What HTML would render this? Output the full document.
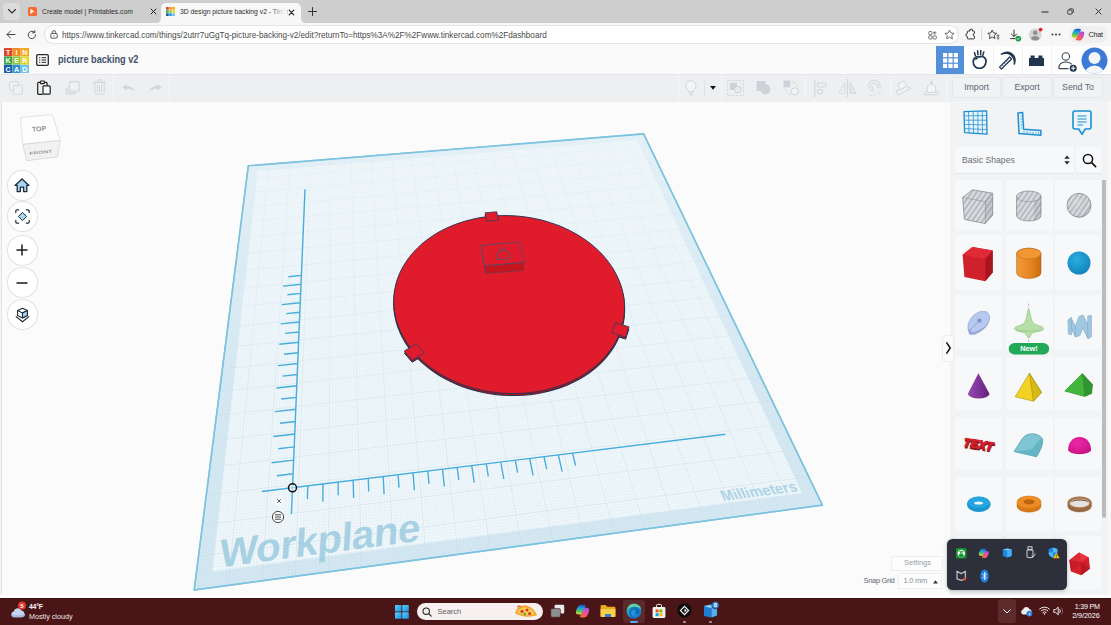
<!DOCTYPE html>
<html lang="en">
<head>
<meta charset="utf-8">
<title>3D design picture backing v2 - Tinkercad</title>
<style>
html,body{margin:0;padding:0;}
body{width:1111px;height:625px;position:relative;overflow:hidden;background:#f9f9f9;font-family:"Liberation Sans",sans-serif;color:#222;}
.abs{position:absolute;}
svg{position:absolute;overflow:visible;}
.t{position:absolute;white-space:nowrap;line-height:1;}
/* browser chrome */
#tabstrip{left:0;top:0;width:1111px;height:23px;background:#cecece;}
#addr{left:0;top:23px;width:1111px;height:23px;background:#f7f7f7;}
#pill{left:45px;top:26px;width:913px;height:17px;border-radius:8.5px;background:#fff;box-shadow:0 0 0 1px #e4e4e4;}
#tcad{left:0;top:46px;width:1111px;height:28px;background:#fafafa;}
#tbar{left:0;top:74px;width:1111px;height:27.6px;background:#edeff1;}
#canvas{left:2px;top:101.6px;width:948px;height:493.4px;background:#fbfbfb;}
#leftedge{left:0;top:101px;width:2px;height:497px;background:#f5f5f5;border-right:1px solid #e4e4e4;box-sizing:border-box;}
#rpanel{left:950px;top:101px;width:158px;height:494px;background:#f2f3f4;}
#taskbar{left:0;top:597.7px;width:1111px;height:28px;background:#4a1517;}
.cell{position:absolute;width:48px;height:54px;background:#f7f8f9;border-radius:2px;}
.tbtn{position:absolute;top:78px;height:19px;background:#f1f2f4;border-radius:2px;color:#5d6673;font-size:8.8px;letter-spacing:-0.05px;text-align:center;line-height:18.4px;box-shadow:0 0 0 1px #e6e8ea;}
.nav{position:absolute;left:10px;width:22px;height:22px;border-radius:11px;background:#fff;box-shadow:0 0 0 1px #e2e2e2;}
</style>
</head>
<body>
<!-- ================= BROWSER CHROME ================= -->
<div id="tabstrip" class="abs"></div>
<!-- tab search button -->
<div class="abs" style="left:3px;top:3px;width:17px;height:17px;border-radius:4px;background:#dcdcdc;"></div>
<svg style="left:7px;top:8px" width="10" height="7" viewBox="0 0 10 7"><path d="M1.5 1.5 L5 5 L8.5 1.5" fill="none" stroke="#333" stroke-width="1.1" stroke-linecap="round" stroke-linejoin="round"/></svg>
<!-- tab 1 (inactive) -->
<div class="abs" style="left:28px;top:7px;width:9px;height:9px;border-radius:1.5px;background:#f66a2f;"></div>
<svg style="left:28px;top:7px" width="9" height="9" viewBox="0 0 9 9"><path d="M2.2 1.8 L6.6 4.4 L4.2 5.4 L2.6 7.4 Z" fill="#fff"/></svg>
<div class="t" id="tab1txt" style="left:42px;top:7.6px;font-size:8px;color:#2c2c2c;transform:scaleX(0.846);transform-origin:0 0;">Create model | Printables.com</div>
<svg style="left:149.5px;top:8px" width="7" height="7" viewBox="0 0 7 7"><path d="M1 1 L6 6 M6 1 L1 6" stroke="#222" stroke-width="1" stroke-linecap="round"/></svg>
<!-- active tab -->
<div class="abs" style="left:161.3px;top:2.5px;width:139.4px;height:21.5px;border-radius:5px 5px 0 0;background:#f7f7f7;"></div>
<svg style="left:155.3px;top:18px" width="6" height="6" viewBox="0 0 6 6"><path d="M6 0 V6 H0 A6 6 0 0 0 6 0Z" fill="#f7f7f7"/></svg>
<svg style="left:300.7px;top:18px" width="6" height="6" viewBox="0 0 6 6"><path d="M0 0 V6 H6 A6 6 0 0 1 0 0Z" fill="#f7f7f7"/></svg>
<!-- tinkercad favicon -->
<svg style="left:166px;top:7px" width="9" height="9" viewBox="0 0 9 9">
<rect x="0" y="0" width="3" height="3" fill="#e2462c"/><rect x="3" y="0" width="3" height="3" fill="#f28b20"/><rect x="6" y="0" width="3" height="3" fill="#f5a81c"/>
<rect x="0" y="3" width="3" height="3" fill="#42a84a"/><rect x="3" y="3" width="3" height="3" fill="#8cc540"/><rect x="6" y="3" width="3" height="3" fill="#e3d325"/>
<rect x="0" y="6" width="3" height="3" fill="#1b5fa8"/><rect x="3" y="6" width="3" height="3" fill="#2b8ed1"/><rect x="6" y="6" width="3" height="3" fill="#6ec1e8"/>
<path d="M3 0V9M6 0V9M0 3H9M0 6H9" stroke="#fff" stroke-width="0.5"/></svg>
<div class="t" id="tab2txt" style="left:180px;top:7.6px;font-size:8px;color:#2c2c2c;transform:scaleX(0.846);transform-origin:0 0;width:127px;overflow:hidden;">3D design picture backing v2 - Tinkercad</div>
<div class="abs" style="left:271px;top:5px;width:16px;height:14px;background:linear-gradient(90deg,rgba(247,247,247,0),#f7f7f7 85%);"></div>
<svg style="left:287.8px;top:8.5px" width="7" height="7" viewBox="0 0 7 7"><path d="M1.2 1.2 L5.8 5.8 M5.8 1.2 L1.2 5.8" stroke="#222" stroke-width="1.15" stroke-linecap="round"/></svg>
<!-- new tab + -->
<svg style="left:307.5px;top:7px" width="9" height="9" viewBox="0 0 9 9"><path d="M4.5 0.5 V8.5 M0.5 4.5 H8.5" stroke="#333" stroke-width="1" stroke-linecap="round"/></svg>
<!-- window controls -->
<svg style="left:1040.5px;top:10.7px" width="8" height="2" viewBox="0 0 8 2"><path d="M0.5 1 H7.5" stroke="#222" stroke-width="1"/></svg>
<svg style="left:1067.3px;top:8.3px" width="7" height="7" viewBox="0 0 9 9"><rect x="1" y="2.5" width="5.5" height="5.5" rx="1.2" fill="none" stroke="#222" stroke-width="1"/><path d="M3 2.5 V2 A1 1 0 0 1 4 1 H7 A1.2 1.2 0 0 1 8.2 2.2 V5 A1 1 0 0 1 7.2 6 H6.6" fill="none" stroke="#222" stroke-width="1"/></svg>
<svg style="left:1094.6px;top:8.4px" width="7" height="7" viewBox="0 0 8 8"><path d="M1 1 L7 7 M7 1 L1 7" stroke="#222" stroke-width="1" stroke-linecap="round"/></svg>

<!-- address bar row -->
<div id="addr" class="abs"></div>
<svg style="left:6px;top:30.2px" width="10" height="9" viewBox="0 0 10 9"><path d="M9 4.5 H1.2 M4.5 1 L1 4.5 L4.5 8" fill="none" stroke="#444" stroke-width="1" stroke-linecap="round" stroke-linejoin="round"/></svg>
<svg style="left:27px;top:29.7px" width="10" height="10" viewBox="0 0 10 10"><path d="M8.6 5 A3.7 3.7 0 1 1 7.4 2.2" fill="none" stroke="#444" stroke-width="1" stroke-linecap="round"/><path d="M7.8 0.6 V2.8 H5.6" fill="none" stroke="#444" stroke-width="1" stroke-linecap="round" stroke-linejoin="round"/></svg>
<div id="pill" class="abs"></div>
<!-- lock -->
<svg style="left:49.5px;top:29.5px" width="8" height="9" viewBox="0 0 8 9"><rect x="0.8" y="3.4" width="6.4" height="4.8" rx="1.1" fill="none" stroke="#444" stroke-width="0.9"/><path d="M2.3 3.4 V2.4 A1.7 1.7 0 0 1 5.7 2.4 V3.4" fill="none" stroke="#444" stroke-width="0.9"/><circle cx="4" cy="5.8" r="0.6" fill="#444"/></svg>
<div class="t" id="urltxt" style="left:62px;top:31.3px;font-size:8.8px;color:#484848;transform:scaleX(0.926);transform-origin:0 0;">https://www.tinkercad.com/things/2utrr7uGgTq-picture-backing-v2/edit?returnTo=https%3A%2F%2Fwww.tinkercad.com%2Fdashboard</div>
<!-- pill right icons: app grid + star -->
<svg style="left:928px;top:29.5px" width="10" height="10" viewBox="0 0 10 10"><rect x="0.8" y="1.5" width="3.2" height="3.2" rx="0.7" fill="none" stroke="#555" stroke-width="0.8"/><rect x="0.8" y="5.8" width="3.2" height="3.2" rx="0.7" fill="none" stroke="#555" stroke-width="0.8"/><rect x="5.1" y="5.8" width="3.2" height="3.2" rx="0.7" fill="none" stroke="#555" stroke-width="0.8"/><path d="M6.7 1.2 V4.6 M5 2.9 H8.4" stroke="#555" stroke-width="0.8"/></svg>
<svg style="left:943.5px;top:29px" width="11" height="11" viewBox="0 0 11 11"><path d="M5.5 1 L6.9 4 L10.1 4.4 L7.7 6.6 L8.4 9.8 L5.5 8.2 L2.6 9.8 L3.3 6.6 L0.9 4.4 L4.1 4 Z" fill="none" stroke="#555" stroke-width="0.85" stroke-linejoin="round"/></svg>
<!-- extension puzzle -->
<svg style="left:964px;top:28.5px" width="12" height="12" viewBox="0 0 12 12"><path d="M4.2 2 H6 A1.3 1.3 0 1 1 8.4 2 H9.6 A0.9 0.9 0 0 1 10.5 2.9 V4.4 A1.4 1.4 0 1 0 10.5 7.2 V9 A0.9 0.9 0 0 1 9.6 9.9 H4.2 A0.9 0.9 0 0 1 3.3 9 V7.4 A1.4 1.4 0 1 1 3.3 4.6 V2.9 A0.9 0.9 0 0 1 4.2 2Z" fill="none" stroke="#333" stroke-width="1" stroke-linejoin="round"/></svg>
<div class="abs" style="left:981px;top:29px;width:1px;height:11px;background:#d8d8d8;"></div>
<!-- favorites star with lines -->
<svg style="left:987px;top:29px" width="13" height="11" viewBox="0 0 13 11"><path d="M5.2 1 L6.5 3.9 L9.6 4.3 L7.3 6.4 L7.9 9.6 L5.2 8 L2.5 9.6 L3.1 6.4 L0.8 4.3 L3.9 3.9 Z" fill="none" stroke="#333" stroke-width="0.9" stroke-linejoin="round"/><path d="M9.6 6.2 H12.2 M9.8 8 H12.2 M10.2 9.8 H12.2" stroke="#333" stroke-width="0.9"/><rect x="8.8" y="5.4" width="4" height="5.2" fill="#f7f7f7" opacity="0"/></svg>
<!-- download -->
<svg style="left:1009.2px;top:28.5px" width="13" height="13" viewBox="0 0 13 13"><path d="M5 1 V7.4 M2.4 5 L5 7.6 L7.6 5 M1.6 9.6 H6" fill="none" stroke="#333" stroke-width="1" stroke-linecap="round" stroke-linejoin="round"/><circle cx="9.3" cy="9.6" r="2.9" fill="#1f9d4a"/><path d="M7.9 9.6 L8.9 10.6 L10.7 8.7" fill="none" stroke="#fff" stroke-width="0.8"/></svg>
<!-- profile -->
<svg style="left:1027.5px;top:27px" width="16" height="15" viewBox="0 0 16 15"><circle cx="7.2" cy="7.7" r="6.3" fill="#d4d4d4"/><circle cx="7.2" cy="5.8" r="2.3" fill="#8f8f8f"/><path d="M2.9 11.8 A4.5 4 0 0 1 11.5 11.8 A6.2 6.2 0 0 1 2.9 11.8Z" fill="#8f8f8f"/><circle cx="12.6" cy="2.6" r="1.9" fill="#e0202b"/></svg>
<!-- more ... -->
<svg style="left:1051px;top:33px" width="10" height="3" viewBox="0 0 10 3"><circle cx="1.4" cy="1.5" r="0.95" fill="#333"/><circle cx="5" cy="1.5" r="0.95" fill="#333"/><circle cx="8.6" cy="1.5" r="0.95" fill="#333"/></svg>
<!-- copilot chat pill -->
<div class="abs" style="left:1068.5px;top:26px;width:39.5px;height:17px;border-radius:8.5px;background:#efefef;"></div>
<svg style="left:1071px;top:28px" width="14" height="13" viewBox="0 0 14 13">
<defs>
<linearGradient id="cpa" x1="0.3" y1="0" x2="0.2" y2="1"><stop offset="0" stop-color="#1a55c8"/><stop offset="0.3" stop-color="#18a0e6"/><stop offset="0.62" stop-color="#4cc466"/><stop offset="1" stop-color="#f7d42c"/></linearGradient>
<linearGradient id="cpb" x1="0.7" y1="0" x2="0.3" y2="1"><stop offset="0" stop-color="#a44ee6"/><stop offset="0.45" stop-color="#e84fa4"/><stop offset="1" stop-color="#f56a2c"/></linearGradient>
<symbol id="copilot" viewBox="0 0 14 13"><path d="M3.4 1.6 C4 0.8 8.6 0.4 9.6 1 C10.4 1.6 9.2 3.6 8.6 5 L6.6 9.4 C6.2 10.2 3 10 1.6 9.4 C0.4 8.8 0.8 6.6 1.4 5 Z" fill="url(#cpa)"/><path d="M8.2 4.6 C8.8 3.2 12.2 3.4 13 4.2 C13.6 5 13 7.4 12.4 8.8 C11.8 10.4 10.8 12 9.6 12.4 C8.2 12.8 5.2 12.6 4.6 11.8 C4.2 11 5.6 10.4 6.2 9.2 Z" fill="url(#cpb)"/></symbol>
</defs>
<use href="#copilot" width="14" height="13"/></svg>
<div class="t" style="left:1088.5px;top:31.1px;font-size:7.2px;color:#2a2a2a;letter-spacing:-0.25px;">Chat</div>
<!-- ================= TINKERCAD HEADER ================= -->
<div id="tcad" class="abs"></div>
<!-- logo -->
<svg style="left:3.7px;top:47.8px" width="25" height="25" viewBox="0 0 25 25" font-family="Liberation Sans, sans-serif" font-weight="bold" font-size="7.1" fill="#fff" text-anchor="middle">
<rect x="0" y="0" width="8.2" height="8.2" fill="#e2462c"/><rect x="8.4" y="0" width="8.2" height="8.2" fill="#f28b20"/><rect x="16.8" y="0" width="8.2" height="8.2" fill="#f7a91d"/>
<rect x="0" y="8.4" width="8.2" height="8.2" fill="#3fa648"/><rect x="8.4" y="8.4" width="8.2" height="8.2" fill="#8cc63f"/><rect x="16.8" y="8.4" width="8.2" height="8.2" fill="#e2d424"/>
<rect x="0" y="16.8" width="8.2" height="8.2" fill="#1a5ea9"/><rect x="8.4" y="16.8" width="8.2" height="8.2" fill="#2a8fd3"/><rect x="16.8" y="16.8" width="8.2" height="8.2" fill="#6dc3ea"/>
<text x="4.1" y="6.7">T</text><text x="12.5" y="6.7">I</text><text x="20.9" y="6.7">N</text>
<text x="4.1" y="15.1">K</text><text x="12.5" y="15.1">E</text><text x="20.9" y="15.1">R</text>
<text x="4.1" y="23.5">C</text><text x="12.5" y="23.5">A</text><text x="20.9" y="23.5">D</text>
</svg>
<!-- list icon -->
<svg style="left:36.3px;top:53.6px" width="13" height="12" viewBox="0 0 13 12"><rect x="0.7" y="0.7" width="11.6" height="10.6" rx="1.2" fill="none" stroke="#2b2b2b" stroke-width="1.3"/><path d="M3 3.7 H4.3 M5.6 3.7 H10.2 M3 6 H4.3 M5.6 6 H10.2 M3 8.3 H4.3 M5.6 8.3 H10.2" stroke="#2b2b2b" stroke-width="1"/></svg>
<div class="t" id="title" style="left:58px;top:54.2px;font-size:11px;font-weight:bold;color:#42506c;transform:scaleX(0.832);transform-origin:0 0;">picture backing v2</div>

<!-- header right buttons -->
<div class="abs" style="left:964px;top:46px;width:147px;height:28px;background:#fff;"></div>
<div class="abs" style="left:936px;top:46px;width:28px;height:28px;background:#548fda;"></div>
<svg style="left:942.5px;top:52.5px" width="15" height="15" viewBox="0 0 15 15"><g fill="#fff"><rect x="0" y="0" width="4.2" height="4.2"/><rect x="5.4" y="0" width="4.2" height="4.2"/><rect x="10.8" y="0" width="4.2" height="4.2"/><rect x="0" y="5.4" width="4.2" height="4.2"/><rect x="5.4" y="5.4" width="4.2" height="4.2"/><rect x="10.8" y="5.4" width="4.2" height="4.2"/><rect x="0" y="10.8" width="4.2" height="4.2"/><rect x="5.4" y="10.8" width="4.2" height="4.2"/><rect x="10.8" y="10.8" width="4.2" height="4.2"/></g></svg>
<div class="abs" style="left:992.5px;top:46px;width:1px;height:28px;background:#f1f1f1;"></div>
<div class="abs" style="left:1021.5px;top:46px;width:1px;height:28px;background:#f1f1f1;"></div>
<div class="abs" style="left:1050.5px;top:46px;width:1px;height:28px;background:#f1f1f1;"></div>
<!-- sim lab (apple with drops) -->
<svg style="left:971px;top:49.3px" width="17" height="21" viewBox="0 0 17 21"><path d="M8.6 8.2 C10.5 6.6 15.2 8 15 12.6 C14.8 16.6 11.8 19.6 8.5 19.2 C5 19.6 2.2 16.8 2.2 12.8 C2.2 8.4 6.6 6.6 8.6 8.2Z" fill="none" stroke="#22364f" stroke-width="1.7"/><path d="M4.4 11 C5 9.6 6.2 9.2 7 9.4" fill="none" stroke="#22364f" stroke-width="1.1"/><path d="M3.4 3.6 L4.4 6.6 M6.6 1.8 L7 5.6 M9.8 1.4 L9.6 5.6 M12.8 3 L11.8 6.4" stroke="#22364f" stroke-width="1.5" stroke-linecap="round"/></svg>
<!-- pickaxe (blocks) -->
<svg style="left:999px;top:51px" width="19" height="19" viewBox="0 0 19 19"><path d="M1.4 3.1 C4 1 7.4 0.2 10.2 0.8 C14.2 2 17 5.6 16.8 9.6 C16.7 11.4 16.3 12.8 15.7 13.9 L14.5 13.3 C15 10.8 14.7 8.8 13.5 6.9 C12.2 4.8 10.2 3.6 8.2 3.1 C6.2 2.7 4.2 3 2.3 4.1 Z" fill="#22364f"/><path d="M10.6 6 L12.6 8 L2.4 18 L0.5 16.1 Z" fill="#fff" stroke="#22364f" stroke-width="1.2" stroke-linejoin="round"/><path d="M9.6 8.6 L3.4 14.8" stroke="#22364f" stroke-width="0.8" stroke-dasharray="1.4 1.1"/></svg>
<!-- brick -->
<svg style="left:1028px;top:54px" width="17" height="13" viewBox="0 0 17 13"><path d="M1 4 H2.6 V1.4 H6.6 V4 H10.4 V1.4 H14.4 V4 H16 V12 H1 Z" fill="#22364f"/></svg>
<!-- add user -->
<svg style="left:1056px;top:50px" width="22" height="22" viewBox="0 0 22 22"><circle cx="9.8" cy="6.4" r="3.7" fill="none" stroke="#39424f" stroke-width="1.05"/><path d="M2.8 18.6 C2.8 14 6 12 9.8 12 C12.4 12 14.4 12.8 15.6 14.4 M2.8 18.6 H12.4" fill="none" stroke="#39424f" stroke-width="1.05"/><circle cx="17.2" cy="18.2" r="3.5" fill="#22364f"/><path d="M17.2 16.1 V20.3 M15.1 18.2 H19.3" stroke="#fff" stroke-width="1.1"/></svg>
<!-- avatar -->
<svg style="left:1080.7px;top:46.6px" width="27" height="27" viewBox="0 0 27 27"><defs><clipPath id="avc"><circle cx="13.5" cy="13.5" r="13"/></clipPath></defs><circle cx="13.5" cy="13.5" r="13" fill="#3c7ad6"/><g clip-path="url(#avc)"><circle cx="13.5" cy="11" r="6" fill="#f3f6fb"/><ellipse cx="13.5" cy="27" rx="9.6" ry="8.6" fill="#f3f6fb"/></g></svg>

<!-- ================= TOOLBAR ================= -->
<div id="tbar" class="abs"></div>
<div class="abs" style="left:0;top:74px;width:1111px;height:1px;background:#e4e6e9;"></div>
<!-- separators -->
<div class="abs" style="left:113px;top:76px;width:1px;height:24px;background:#f7f8f9;"></div>
<div class="abs" style="left:169px;top:76px;width:1px;height:24px;background:#f7f8f9;"></div>
<div class="abs" style="left:678px;top:76px;width:1px;height:24px;background:#f7f8f9;"></div>
<div class="abs" style="left:704px;top:80px;width:1px;height:16px;background:#e0e3e6;"></div>
<div class="abs" style="left:721px;top:76px;width:1px;height:24px;background:#f7f8f9;"></div>
<div class="abs" style="left:805px;top:76px;width:1px;height:24px;background:#f7f8f9;"></div>
<div class="abs" style="left:890px;top:76px;width:1px;height:24px;background:#f7f8f9;"></div>
<div class="abs" style="left:946px;top:76px;width:1px;height:24px;background:#f7f8f9;"></div>
<!-- copy -->
<svg style="left:9px;top:81px" width="14" height="14" viewBox="0 0 14 14"><rect x="0.6" y="0.6" width="8.8" height="8.8" rx="1" fill="#eef0f2" stroke="#d3d7dd" stroke-width="1"/><rect x="4.4" y="4.4" width="9" height="9" rx="1" fill="#eef0f2" stroke="#d3d7dd" stroke-width="1"/></svg>
<!-- paste (active) -->
<svg style="left:37px;top:80px" width="14" height="15" viewBox="0 0 14 15"><path d="M3.6 2.4 H1.6 A0.9 0.9 0 0 0 0.7 3.3 V13.4 A0.9 0.9 0 0 0 1.6 14.3 H5.6 M7.2 2.4 H9.2 A0.9 0.9 0 0 1 10.1 3.3 V5.4" fill="none" stroke="#1f1f1f" stroke-width="1.2"/><rect x="3.4" y="1" width="4" height="2.6" rx="0.7" fill="#eceef0" stroke="#1f1f1f" stroke-width="1.1"/><rect x="6" y="5.8" width="7.2" height="8.4" rx="0.9" fill="#f8f9fa" stroke="#1f1f1f" stroke-width="1.2"/></svg>
<!-- duplicate -->
<svg style="left:65px;top:81px" width="15" height="14" viewBox="0 0 15 14"><path d="M2.4 7.4 L1 8.4 V13 H9.6 L10.4 12" fill="none" stroke="#d3d7dd" stroke-width="1"/><path d="M4 5.6 L2.6 6.6 V11.4 H11 L12 10.4" fill="none" stroke="#d3d7dd" stroke-width="1"/><rect x="4.6" y="0.6" width="9.6" height="9.4" rx="0.9" fill="#eef0f2" stroke="#d3d7dd" stroke-width="1.1"/></svg>
<!-- delete -->
<svg style="left:93px;top:79px" width="13" height="16" viewBox="0 0 13 16"><path d="M0.6 3.4 H12.4 M4.6 3.2 V1.6 A0.8 0.8 0 0 1 5.4 0.8 H7.6 A0.8 0.8 0 0 1 8.4 1.6 V3.2" fill="none" stroke="#d3d7dd" stroke-width="1.1"/><path d="M1.8 3.6 V14 A1.2 1.2 0 0 0 3 15.2 H10 A1.2 1.2 0 0 0 11.2 14 V3.6" fill="none" stroke="#d3d7dd" stroke-width="1.1"/><path d="M4.4 5.8 V13 M6.5 5.8 V13 M8.6 5.8 V13" stroke="#d3d7dd" stroke-width="1"/></svg>
<!-- undo / redo -->
<svg style="left:122px;top:84px" width="13" height="8" viewBox="0 0 13 8"><path d="M5 0.2 L0.4 3.4 L5 6.6 V4.6 C8 4.4 10.4 5.4 12.4 7.6 C11.8 4.2 9 2.2 5 2.2 Z" fill="#cfd4db"/></svg>
<svg style="left:149px;top:84px" width="13" height="8" viewBox="0 0 13 8"><path d="M8 0.2 L12.6 3.4 L8 6.6 V4.6 C5 4.4 2.6 5.4 0.6 7.6 C1.2 4.2 4 2.2 8 2.2 Z" fill="#cfd4db"/></svg>
<!-- bulb -->
<svg style="left:685px;top:80px" width="12" height="17" viewBox="0 0 12 17"><path d="M6 0.7 A5 5 0 0 1 9.2 9.6 C8.6 10.2 8.4 10.8 8.4 11.6 H3.6 C3.6 10.8 3.4 10.2 2.8 9.6 A5 5 0 0 1 6 0.7Z" fill="#f3f5f6" stroke="#d3d7dd" stroke-width="1"/><path d="M3.8 13 H8.2 M4.4 14.4 H7.6 M5.2 15.8 H6.8" stroke="#d3d7dd" stroke-width="1"/></svg>
<svg style="left:709.5px;top:86px" width="6" height="4" viewBox="0 0 6 4"><path d="M0 0 H6 L3 3.8 Z" fill="#111"/></svg>
<!-- group -->
<svg style="left:727px;top:80px" width="17" height="16" viewBox="0 0 17 16"><rect x="0.6" y="0.6" width="15.8" height="14.8" fill="none" stroke="#d3d7dd" stroke-width="1" stroke-dasharray="2.4 1.2"/><rect x="3" y="3" width="7" height="7" fill="#cdd2d9"/><circle cx="10.8" cy="9.6" r="3.4" fill="#e8ecf0" stroke="#cdd2d9" stroke-width="1"/></svg>
<!-- ungroup (merged) -->
<svg style="left:756px;top:80px" width="16" height="16" viewBox="0 0 16 16"><path d="M0.6 1 H9.4 V4.2 A5 5 0 1 1 4.6 11 H0.6 Z" fill="#cdd2d9"/></svg>
<!-- hole/solid -->
<svg style="left:783px;top:80px" width="17" height="16" viewBox="0 0 17 16"><rect x="0.6" y="0.6" width="6.6" height="6.6" fill="#cdd2d9"/><circle cx="11.8" cy="11.4" r="3.6" fill="#f2f4f6" stroke="#cdd2d9" stroke-width="1"/><path d="M9.4 1 L9.8 2.6 M12.6 2.6 L11.6 4 M14.8 5.4 L13.2 6 M1.4 9.6 L3 10 M3.4 12.6 L4.8 11.8 M6.2 14.8 L6.6 13.2" stroke="#cdd2d9" stroke-width="1"/></svg>
<!-- align -->
<svg style="left:813.5px;top:80px" width="13" height="17" viewBox="0 0 13 17"><path d="M0.8 0 V17" stroke="#d3d7dd" stroke-width="1.1"/><rect x="3.4" y="3" width="8.6" height="4" rx="1" fill="none" stroke="#d3d7dd" stroke-width="1.1"/><rect x="3.4" y="9.6" width="5" height="4" rx="1" fill="none" stroke="#d3d7dd" stroke-width="1.1"/></svg>
<!-- mirror -->
<svg style="left:838px;top:79px" width="19" height="18" viewBox="0 0 19 18"><path d="M9.5 0 V18" stroke="#d3d7dd" stroke-width="1.1"/><path d="M7 3.6 V14.4 H1 Z" fill="none" stroke="#d9dde2" stroke-width="1"/><path d="M12 3.6 V14.4 H18 Z" fill="#e4e7eb" stroke="#d3d7dd" stroke-width="1"/></svg>
<!-- cruise magnet -->
<svg style="left:866.5px;top:79.5px" width="17" height="17" viewBox="0 0 17 17"><path d="M4.2 11.4 L2 6.8 A5.4 5.4 0 0 1 11.8 2.6 L13.6 7 L11.2 8 L9.4 3.8 A2.8 2.8 0 0 0 4.4 5.8 L6.6 10.2 Z" fill="none" stroke="#d3d7dd" stroke-width="1"/><path d="M1.6 14.2 C4 16.2 8 15.2 10 13.6 C12 12.2 14 12.6 15.6 14.4" fill="none" stroke="#d3d7dd" stroke-width="1" stroke-dasharray="1.4 1.2"/></svg>
<!-- workplane tool -->
<svg style="left:895px;top:80px" width="17" height="16" viewBox="0 0 17 16"><path d="M3 3.6 L9.6 0.8 L11.6 6.4 L5 9.4 Z" fill="#f2f4f6" stroke="#d3d7dd" stroke-width="1"/><path d="M5 9.4 L1 11 L3 15.2 L16 8.4 L11.6 6.4" fill="none" stroke="#d3d7dd" stroke-width="1"/></svg>
<!-- drop to workplane -->
<svg style="left:924px;top:79px" width="15" height="17" viewBox="0 0 15 17"><path d="M7.5 0.4 V4.6 M5.8 3 L7.5 4.8 L9.2 3" fill="none" stroke="#d3d7dd" stroke-width="1"/><path d="M3.4 12.4 V9.4 A4.1 4.1 0 0 1 11.6 9.4 V12.4" fill="#f2f4f6" stroke="#d3d7dd" stroke-width="1"/><path d="M3.4 12.4 H1.4 L0.6 15.8 H14.4 L13.6 12.4 H11.6 M3.4 13.6 H11.6" fill="none" stroke="#d3d7dd" stroke-width="1"/></svg>
<!-- import/export/send -->
<div class="tbtn" style="left:953px;width:47px;">Import</div>
<div class="tbtn" style="left:1003px;width:48px;">Export</div>
<div class="tbtn" style="left:1054px;width:48px;">Send To</div>
<!-- ================= 3D SCENE ================= -->
<div id="leftedge" class="abs"></div>
<div id="canvas" class="abs"></div>
<svg style="left:0;top:101px" width="950" height="494" viewBox="0 101 950 494">
<defs><clipPath id="cv"><rect x="0" y="101" width="950" height="494"/></clipPath></defs>
<g clip-path="url(#cv)">
<polygon points="194.2,590 822.4,505.1 643.6,133.9 248.3,165.8" fill="#d3e8f2" stroke="#86c6e0" stroke-width="1.3" stroke-linejoin="round"/>
<polygon points="212.4,571.5 802,493.1 637.3,140.3 257.6,171.3" fill="#eff7fa"/>
<path d="M197.6,589.5L250.4,165.6M194.6,586.6L821,502.2M201,589.1L252.5,165.5M195.1,583.1L819.6,499.3M204.4,588.6L254.5,165.3M195.5,579.7L818.2,496.4M207.9,588.2L256.6,165.1M195.9,576.3L816.8,493.5M211.3,587.7L258.7,165M196.4,573L815.4,490.7M214.7,587.2L260.8,164.8M196.8,569.6L814.1,487.8M218.1,586.8L262.9,164.6M197.2,566.3L812.7,485M221.5,586.3L264.9,164.5M197.6,563L811.4,482.2M224.9,585.9L267,164.3M198.1,559.8L810,479.4M231.6,584.9L271.2,164M198.9,553.3L807.4,473.9M235,584.5L273.2,163.8M199.3,550L806,471.1M238.4,584L275.3,163.6M199.7,546.8L804.7,468.4M241.8,583.6L277.4,163.5M200.1,543.7L803.4,465.7M245.2,583.1L279.4,163.3M200.5,540.5L802.1,463M248.5,582.7L281.5,163.1M200.9,537.4L800.8,460.3M251.9,582.2L283.6,163M201.3,534.2L799.5,457.6M255.3,581.7L285.6,162.8M201.7,531.1L798.3,455M258.6,581.3L287.7,162.6M202.1,528L797,452.3M265.3,580.4L291.8,162.3M202.9,521.9L794.5,447.1M268.7,579.9L293.9,162.1M203.3,518.9L793.2,444.5M272.1,579.5L295.9,162M203.7,515.9L792,441.9M275.4,579L298,161.8M204,512.9L790.7,439.4M278.8,578.6L300.1,161.6M204.4,509.9L789.5,436.8M282.1,578.1L302.1,161.5M204.8,506.9L788.3,434.3M285.4,577.7L304.2,161.3M205.2,504L787.1,431.7M288.8,577.2L306.2,161.1M205.5,501.1L785.9,429.2M292.1,576.8L308.3,161M205.9,498.2L784.7,426.7M298.8,575.9L312.4,160.6M206.6,492.4L782.3,421.8M302.1,575.4L314.4,160.5M207,489.5L781.1,419.3M305.4,575L316.5,160.3M207.4,486.7L779.9,416.9M308.7,574.5L318.5,160.1M207.7,483.9L778.7,414.4M312.1,574.1L320.6,160M208.1,481L777.6,412M315.4,573.6L322.6,159.8M208.5,478.3L776.4,409.6M318.7,573.2L324.6,159.6M208.8,475.5L775.2,407.2M322,572.7L326.7,159.5M209.2,472.7L774.1,404.8M325.3,572.3L328.7,159.3M209.5,470L773,402.4M331.9,571.4L332.8,159M210.2,464.5L770.7,397.7M335.2,570.9L334.8,158.8M210.5,461.8L769.6,395.4M338.5,570.5L336.9,158.7M210.9,459.1L768.4,393.1M341.8,570.1L338.9,158.5M211.2,456.4L767.3,390.8M345.1,569.6L340.9,158.3M211.6,453.8L766.2,388.5M348.4,569.2L343,158.2M211.9,451.1L765.1,386.2M351.6,568.7L345,158M212.2,448.5L764,383.9M354.9,568.3L347,157.8M212.6,445.9L762.9,381.6M358.2,567.8L349.1,157.7M212.9,443.3L761.8,379.4M364.7,567L353.1,157.3M213.6,438.1L759.7,374.9M368,566.5L355.2,157.2M213.9,435.6L758.6,372.7M371.3,566.1L357.2,157M214.2,433L757.6,370.5M374.5,565.6L359.2,156.8M214.5,430.5L756.5,368.3M377.8,565.2L361.2,156.7M214.9,428L755.5,366.1M381.1,564.7L363.3,156.5M215.2,425.5L754.4,363.9M384.3,564.3L365.3,156.4M215.5,423L753.4,361.8M387.6,563.9L367.3,156.2M215.8,420.5L752.3,359.6M390.8,563.4L369.3,156M216.1,418L751.3,357.5M397.3,562.6L373.4,155.7M216.8,413.1L749.2,353.2M400.5,562.1L375.4,155.5M217.1,410.7L748.2,351.1M403.8,561.7L377.4,155.4M217.4,408.3L747.2,349M407,561.2L379.4,155.2M217.7,405.9L746.2,346.9M410.2,560.8L381.4,155.1M218,403.5L745.2,344.8M413.5,560.4L383.4,154.9M218.3,401.1L744.2,342.8M416.7,559.9L385.4,154.7M218.6,398.8L743.2,340.7M419.9,559.5L387.4,154.6M218.9,396.4L742.2,338.7M423.1,559.1L389.5,154.4M219.2,394.1L741.2,336.6M429.6,558.2L393.5,154.1M219.8,389.4L739.3,332.6M432.8,557.8L395.5,153.9M220.1,387.1L738.3,330.5M436,557.3L397.5,153.8M220.4,384.9L737.4,328.5M439.2,556.9L399.5,153.6M220.7,382.6L736.4,326.6M442.4,556.5L401.5,153.4M220.9,380.3L735.4,324.6M445.6,556L403.5,153.3M221.2,378L734.5,322.6M448.8,555.6L405.5,153.1M221.5,375.8L733.5,320.6M452,555.2L407.5,153M221.8,373.6L732.6,318.7M455.2,554.7L409.5,152.8M222.1,371.3L731.7,316.7M461.6,553.9L413.5,152.5M222.6,366.9L729.8,312.9M464.8,553.4L415.5,152.3M222.9,364.7L728.9,310.9M468,553L417.5,152.1M223.2,362.6L728,309M471.1,552.6L419.5,152M223.5,360.4L727,307.1M474.3,552.1L421.4,151.8M223.8,358.2L726.1,305.2M477.5,551.7L423.4,151.7M224,356.1L725.2,303.4M480.7,551.3L425.4,151.5M224.3,354L724.3,301.5M483.8,550.9L427.4,151.3M224.6,351.8L723.4,299.6M487,550.4L429.4,151.2M224.8,349.7L722.5,297.8M493.3,549.6L433.4,150.9M225.4,345.5L720.8,294.1M496.5,549.1L435.4,150.7M225.6,343.4L719.9,292.2M499.6,548.7L437.3,150.5M225.9,341.4L719,290.4M502.8,548.3L439.3,150.4M226.2,339.3L718.1,288.6M505.9,547.9L441.3,150.2M226.4,337.3L717.2,286.8M509.1,547.4L443.3,150.1M226.7,335.2L716.4,285M512.2,547L445.3,149.9M227,333.2L715.5,283.2M515.4,546.6L447.2,149.7M227.2,331.2L714.7,281.4M518.5,546.2L449.2,149.6M227.5,329.1L713.8,279.7M524.8,545.3L453.2,149.3M228,325.1L712.1,276.1M527.9,544.9L455.1,149.1M228.2,323.2L711.3,274.4M531,544.5L457.1,148.9M228.5,321.2L710.4,272.6M534.2,544.1L459.1,148.8M228.7,319.2L709.6,270.9M537.3,543.6L461.1,148.6M229,317.3L708.8,269.2M540.4,543.2L463,148.5M229.2,315.3L707.9,267.5M543.5,542.8L465,148.3M229.5,313.4L707.1,265.7M546.6,542.4L467,148.2M229.7,311.4L706.3,264M549.7,541.9L468.9,148M230,309.5L705.5,262.3M556,541.1L472.9,147.7M230.5,305.7L703.8,259M559.1,540.7L474.8,147.5M230.7,303.8L703,257.3M562.2,540.3L476.8,147.4M230.9,301.9L702.2,255.6M565.3,539.9L478.7,147.2M231.2,300.1L701.4,254M568.4,539.4L480.7,147M231.4,298.2L700.6,252.3M571.5,539L482.7,146.9M231.7,296.3L699.8,250.7M574.6,538.6L484.6,146.7M231.9,294.5L699.1,249M577.6,538.2L486.6,146.6M232.1,292.6L698.3,247.4M580.7,537.8L488.5,146.4M232.4,290.8L697.5,245.8M586.9,536.9L492.4,146.1M232.8,287.2L695.9,242.5M590,536.5L494.4,145.9M233.1,285.3L695.2,240.9M593.1,536.1L496.3,145.8M233.3,283.5L694.4,239.3M596.1,535.7L498.3,145.6M233.5,281.8L693.6,237.7M599.2,535.3L500.2,145.5M233.7,280L692.9,236.2M602.3,534.9L502.2,145.3M234,278.2L692.1,234.6M605.3,534.4L504.1,145.2M234.2,276.4L691.3,233M608.4,534L506.1,145M234.4,274.7L690.6,231.4M611.5,533.6L508,144.8M234.6,272.9L689.8,229.9M617.6,532.8L511.9,144.5M235.1,269.4L688.3,226.8M620.6,532.4L513.9,144.4M235.3,267.7L687.6,225.3M623.7,532L515.8,144.2M235.5,266L686.9,223.7M626.7,531.5L517.7,144.1M235.7,264.3L686.1,222.2M629.8,531.1L519.7,143.9M236,262.6L685.4,220.7M632.8,530.7L521.6,143.7M236.2,260.9L684.7,219.2M635.9,530.3L523.6,143.6M236.4,259.2L683.9,217.7M638.9,529.9L525.5,143.4M236.6,257.5L683.2,216.2M641.9,529.5L527.4,143.3M236.8,255.8L682.5,214.7M648,528.7L531.3,143M237.2,252.5L681.1,211.7M651,528.3L533.2,142.8M237.5,250.8L680.4,210.2M654,527.9L535.2,142.7M237.7,249.2L679.7,208.8M657.1,527.4L537.1,142.5M237.9,247.5L679,207.3M660.1,527L539,142.3M238.1,245.9L678.2,205.8M663.1,526.6L540.9,142.2M238.3,244.3L677.6,204.4M666.1,526.2L542.9,142M238.5,242.7L676.9,202.9M669.1,525.8L544.8,141.9M238.7,241L676.2,201.5M672.1,525.4L546.7,141.7M238.9,239.4L675.5,200.1M678.2,524.6L550.6,141.4M239.3,236.3L674.1,197.2M681.2,524.2L552.5,141.3M239.5,234.7L673.4,195.8M684.2,523.8L554.4,141.1M239.7,233.1L672.7,194.4M687.2,523.4L556.3,140.9M239.9,231.5L672.1,193M690.1,523L558.3,140.8M240.1,230L671.4,191.6M693.1,522.6L560.2,140.6M240.3,228.4L670.7,190.2M696.1,522.2L562.1,140.5M240.5,226.8L670,188.8M699.1,521.8L564,140.3M240.7,225.3L669.4,187.4M702.1,521.4L565.9,140.2M240.9,223.8L668.7,186M708.1,520.6L569.8,139.9M241.3,220.7L667.4,183.3M711,520.1L571.7,139.7M241.5,219.2L666.7,181.9M714,519.7L573.6,139.6M241.7,217.7L666.1,180.6M717,519.3L575.5,139.4M241.9,216.2L665.4,179.2M720,518.9L577.4,139.2M242.1,214.7L664.8,177.9M722.9,518.5L579.3,139.1M242.3,213.2L664.1,176.5M725.9,518.1L581.2,138.9M242.4,211.7L663.5,175.2M728.9,517.7L583.1,138.8M242.6,210.2L662.9,173.9M731.8,517.3L585,138.6M242.8,208.7L662.2,172.6M737.7,516.5L588.8,138.3M243.2,205.8L661,169.9M740.7,516.1L590.7,138.2M243.4,204.3L660.3,168.6M743.6,515.7L592.6,138M243.6,202.9L659.7,167.3M746.6,515.3L594.5,137.9M243.8,201.4L659.1,166M749.5,514.9L596.4,137.7M243.9,200L658.4,164.7M752.5,514.6L598.3,137.6M244.1,198.6L657.8,163.4M755.4,514.2L600.2,137.4M244.3,197.1L657.2,162.1M758.4,513.8L602.1,137.2M244.5,195.7L656.6,160.9M761.3,513.4L604,137.1M244.7,194.3L656,159.6M767.2,512.6L607.8,136.8M245,191.5L654.8,157.1M770.1,512.2L609.7,136.6M245.2,190.1L654.1,155.8M773,511.8L611.6,136.5M245.4,188.7L653.5,154.5M775.9,511.4L613.5,136.3M245.6,187.3L652.9,153.3M778.9,511L615.4,136.2M245.7,185.9L652.3,152M781.8,510.6L617.3,136M245.9,184.5L651.7,150.8M784.7,510.2L619.2,135.9M246.1,183.2L651.1,149.6M787.6,509.8L621,135.7M246.3,181.8L650.6,148.3M790.5,509.4L622.9,135.6M246.4,180.4L650,147.1M796.3,508.6L626.7,135.3M246.8,177.7L648.8,144.7M799.2,508.2L628.6,135.1M247,176.4L648.2,143.4M802.1,507.8L630.5,135M247.1,175L647.6,142.2M805,507.4L632.3,134.8M247.3,173.7L647,141M807.9,507.1L634.2,134.7M247.5,172.4L646.5,139.8M810.8,506.7L636.1,134.5M247.6,171L645.9,138.6M813.7,506.3L638,134.4M247.8,169.7L645.3,137.4M816.6,505.9L639.8,134.2M248,168.4L644.7,136.3M819.5,505.5L641.7,134.1M248.1,167.1L644.2,135.1" stroke="#b2cfdc" stroke-width="0.3" stroke-opacity="0.32" fill="none"/>
<path d="M194.2,590L248.3,165.8M194.2,590L822.4,505.1M228.2,585.4L269.1,164.1M198.5,556.5L808.7,476.6M262,580.8L289.8,162.5M202.5,525L795.7,449.7M295.4,576.3L310.3,160.8M206.3,495.3L783.5,424.2M328.6,571.8L330.8,159.1M209.9,467.2L771.8,400.1M361.5,567.4L351.1,157.5M213.2,440.7L760.8,377.1M394.1,563L371.3,155.9M216.4,415.6L750.3,355.3M426.4,558.6L391.5,154.2M219.5,391.8L740.3,334.6M458.4,554.3L411.5,152.6M222.4,369.1L730.7,314.8M490.2,550L431.4,151M225.1,347.6L721.6,295.9M521.6,545.7L451.2,149.4M227.7,327.1L713,277.9M552.9,541.5L470.9,147.8M230.2,307.6L704.7,260.6M583.8,537.3L490.5,146.3M232.6,289L696.7,244.1M614.5,533.2L510,144.7M234.9,271.2L689.1,228.3M645,529.1L529.4,143.1M237,254.1L681.8,213.2M675.1,525L548.7,141.6M239.1,237.8L674.8,198.6M705.1,521L567.8,140M241.1,222.2L668.1,184.7M734.8,516.9L586.9,138.5M243,207.3L661.6,171.2M764.2,513L605.9,136.9M244.8,192.9L655.4,158.3M793.4,509L624.8,135.4M246.6,179.1L649.4,145.9M822.4,505.1L643.6,133.9M248.3,165.8L643.6,133.9" stroke="#bcd6e1" stroke-width="0.7" stroke-opacity="0.6" fill="none"/>
<defs><linearGradient id="fade" gradientUnits="userSpaceOnUse" x1="0" y1="590" x2="0" y2="134"><stop offset="0" stop-color="#f1f8fb" stop-opacity="0"/><stop offset="0.45" stop-color="#f1f8fb" stop-opacity="0.12"/><stop offset="1" stop-color="#f1f8fb" stop-opacity="0.62"/></linearGradient></defs>
<polygon points="195.7,588.4 820.7,504.1 643.1,134.4 249.1,166.3" fill="url(#fade)"/>
<polygon points="194.2,590 822.4,505.1 643.6,133.9 248.3,165.8" fill="none" stroke="#7cc3e0" stroke-width="1.6" stroke-linejoin="round"/>
<text transform="matrix(3.2938 -0.4369 -0.1971 3.2715 319 554.1)" font-family="Liberation Sans, sans-serif" font-weight="bold" font-size="12.2" fill="#9ccbe0" fill-opacity="0.85" text-anchor="middle" letter-spacing="-0.15">Workplane</text>
<text transform="matrix(2.8551 -0.3789 1.3237 2.8486 798.7 491.1)" font-family="Liberation Sans, sans-serif" font-weight="bold" font-size="5.05" fill="#9ccbe0" fill-opacity="0.8" text-anchor="end" letter-spacing="0">Millimeters</text>
<path d="M291.4,514L305,189.3M261.8,491.5L725.4,434.3M307.8,485.9L307.4,499.1M293.1,473.8L276.8,475.7M323,484L322.8,501.8M293.7,460.1L271.6,462.8M338.1,482.1L338.2,495.2M294.2,446.9L278.4,448.8M353.2,480.3L353.6,497.9M294.8,434L273.3,436.5M368.3,478.4L368.7,491.4M295.3,421.5L279.9,423.2M383.2,476.6L384.1,494.1M295.8,409.3L274.9,411.6M398.1,474.7L399,487.6M296.3,397.4L281.3,399M413,472.9L414.4,490.3M296.8,385.8L276.4,388M427.8,471.1L429,483.8M297.3,374.5L282.6,376.1M442.5,469.2L444.4,486.5M297.7,363.5L277.9,365.6M457.2,467.4L458.8,480.1M298.2,352.7L283.9,354.2M471.8,465.6L474.2,482.7M298.6,342.2L279.3,344.3M486.3,463.8L488.3,476.4M299.1,332L285.1,333.4M500.8,462L503.8,479M299.5,322L280.6,323.9M515.3,460.3L517.6,472.7M299.9,312.3L286.3,313.6M529.7,458.5L533.1,475.3M300.3,302.7L281.8,304.6M544,456.7L546.7,469.1M300.7,293.4L287.4,294.7M558.3,454.9L562.2,471.7M301.1,284.3L283,286.1M572.5,453.2L575.6,465.5M301.4,275.4L288.4,276.7" stroke="#45acdb" stroke-width="1.4" fill="none" stroke-linecap="butt"/>
<circle cx="292.5" cy="487.8" r="4" fill="#e9f4f9" fill-opacity="0.6" stroke="#111" stroke-width="1.5"/>
<circle cx="279" cy="501" r="4.4" fill="#f4f9fb" fill-opacity="0.9"/><path d="M277.2 499.2 L280.8 502.8 M280.8 499.2 L277.2 502.8" stroke="#333" stroke-width="0.8"/>
<circle cx="278" cy="517" r="5.6" fill="#fbfdfe" stroke="#333" stroke-width="0.9"/><path d="M275 514.8 H281 M275 517 H281 M275 519.2 H281" stroke="#333" stroke-width="0.9"/>
<polygon points="620.3,285.6 618.5,281.2 616.5,276.9 614.2,272.7 611.7,268.6 608.9,264.6 605.9,260.7 602.7,257 599.2,253.4 595.6,250 591.8,246.7 587.7,243.6 583.5,240.6 579.2,237.8 574.7,235.2 570.1,232.7 565.3,230.4 560.5,228.3 555.5,226.4 550.4,224.7 545.3,223.1 540.1,221.7 534.8,220.6 529.5,219.6 524.1,218.8 518.7,218.2 513.3,217.8 507.9,217.6 502.5,217.6 497.1,217.8 491.7,218.2 486.4,218.8 481.1,219.5 475.9,220.5 470.7,221.7 465.6,223 460.6,224.6 455.7,226.3 450.9,228.2 446.2,230.3 441.6,232.6 437.2,235 433,237.7 428.9,240.5 424.9,243.4 421.2,246.6 417.6,249.9 414.3,253.3 411.2,256.9 408.3,260.6 405.6,264.5 403.2,268.4 401,272.5 399.1,276.7 397.5,281 396.1,285.4 395.1,289.9 394.3,294.5 393.9,299.1 393.7,303.7 393.9,308.4 394.4,313.1 395.3,317.9 396.4,322.6 397.9,327.3 399.8,331.9 401.9,336.5 404.4,341.1 407.3,345.6 410.4,349.9 413.9,354.2 417.7,358.3 421.8,362.3 426.2,366.1 430.9,369.8 435.8,373.2 441,376.5 446.5,379.5 452.2,382.3 458,384.9 464.1,387.2 470.3,389.3 476.7,391 483.2,392.5 489.8,393.7 496.5,394.6 503.2,395.2 510,395.5 516.7,395.5 523.4,395.2 530.1,394.6 536.7,393.7 543.1,392.5 549.5,391 555.7,389.2 561.8,387.2 567.6,384.9 573.2,382.3 578.7,379.5 583.8,376.5 588.7,373.2 593.3,369.7 597.7,366.1 601.7,362.3 605.4,358.3 608.8,354.2 611.9,349.9 614.7,345.6 617.1,341.1 619.2,336.6 620.9,332 622.3,327.3 623.4,322.6 624.1,317.9 624.5,313.2 624.6,308.5 624.3,303.8 623.8,299.2 622.9,294.6 621.7,290" fill="#a3141f" stroke="#27324f" stroke-width="1.1" stroke-linejoin="round"/>
<polygon points="498.6,222.2 496.7,213.8 485.1,214.8 486.8,223.2" fill="#a3141f" stroke="#27324f" stroke-width="1" stroke-linejoin="round"/>
<polygon points="611.7,334.7 625.6,339.1 629,328.9 615.2,324.6" fill="#a3141f" stroke="#27324f" stroke-width="1" stroke-linejoin="round"/>
<polygon points="416.4,345.8 404.3,353 412.2,362.2 424.3,354.9" fill="#a3141f" stroke="#27324f" stroke-width="1" stroke-linejoin="round"/>
<polygon points="620.3,283.6 618.5,279.2 616.5,274.9 614.2,270.7 611.7,266.6 608.9,262.6 605.9,258.7 602.7,255 599.2,251.4 595.6,248 591.8,244.7 587.7,241.6 583.5,238.6 579.2,235.8 574.7,233.2 570.1,230.7 565.3,228.4 560.5,226.3 555.5,224.4 550.4,222.7 545.3,221.1 540.1,219.7 534.8,218.6 529.5,217.6 524.1,216.8 518.7,216.2 513.3,215.8 507.9,215.6 502.5,215.6 497.1,215.8 491.7,216.2 486.4,216.8 481.1,217.5 475.9,218.5 470.7,219.7 465.6,221 460.6,222.6 455.7,224.3 450.9,226.2 446.2,228.3 441.6,230.6 437.2,233 433,235.7 428.9,238.5 424.9,241.4 421.2,244.6 417.6,247.9 414.3,251.3 411.2,254.9 408.3,258.6 405.6,262.5 403.2,266.4 401,270.5 399.1,274.7 397.5,279 396.1,283.4 395.1,287.9 394.3,292.5 393.9,297.1 393.7,301.7 393.9,306.4 394.4,311.1 395.3,315.9 396.4,320.6 397.9,325.3 399.8,329.9 401.9,334.5 404.4,339.1 407.3,343.6 410.4,347.9 413.9,352.2 417.7,356.3 421.8,360.3 426.2,364.1 430.9,367.8 435.8,371.2 441,374.5 446.5,377.5 452.2,380.3 458,382.9 464.1,385.2 470.3,387.3 476.7,389 483.2,390.5 489.8,391.7 496.5,392.6 503.2,393.2 510,393.5 516.7,393.5 523.4,393.2 530.1,392.6 536.7,391.7 543.1,390.5 549.5,389 555.7,387.2 561.8,385.2 567.6,382.9 573.2,380.3 578.7,377.5 583.8,374.5 588.7,371.2 593.3,367.7 597.7,364.1 601.7,360.3 605.4,356.3 608.8,352.2 611.9,347.9 614.7,343.6 617.1,339.1 619.2,334.6 620.9,330 622.3,325.3 623.4,320.6 624.1,315.9 624.5,311.2 624.6,306.5 624.3,301.8 623.8,297.2 622.9,292.6 621.7,288" fill="#e01b2b" stroke="#2f3555" stroke-width="1" stroke-linejoin="round"/>
<polygon points="498.6,220.2 496.7,211.8 485.1,212.8 486.8,221.2" fill="#e01b2b" stroke="#4a3a58" stroke-width="0.9" stroke-linejoin="round"/>
<polygon points="611.7,332.7 625.6,337.1 629,326.9 615.2,322.6" fill="#e01b2b" stroke="#4a3a58" stroke-width="0.9" stroke-linejoin="round"/>
<polygon points="416.4,343.8 404.3,351 412.2,360.2 424.3,352.9" fill="#e01b2b" stroke="#4a3a58" stroke-width="0.9" stroke-linejoin="round"/>
<polygon points="481,245.3 484.6,265.7 485.7,273.8 482.2,254" fill="#b5141e" stroke="#5b4a66" stroke-width="0.6" stroke-linejoin="round"/>
<polygon points="484.6,265.7 524.4,262.2 523.4,270.6 486,273.4" fill="#c5161f" stroke="#6a3a55" stroke-width="0.7" stroke-linejoin="round"/>
<polygon points="481,245.3 519,242.1 524.4,262.2 484.6,265.7" fill="#e01b2b" stroke="#5b4a66" stroke-width="0.9" stroke-linejoin="round"/>
<g transform="translate(503 254.4) rotate(-4)" fill="none" stroke="#5f5068" stroke-width="1" stroke-linejoin="round"><path d="M-3 -7 L-1.8 -3.8 C-5.4 -2.4 -7.2 1.2 -6 4.8 H6.4 C7.6 1.2 5.6 -2.4 2 -3.8 L3.2 -7"/><path d="M-1.8 -3.8 C-0.6 -5 0.8 -5 2 -3.8"/></g>
</g></svg>
<!-- ================= CANVAS OVERLAYS ================= -->
<!-- view cube -->
<svg style="left:0;top:101px" width="80" height="70" viewBox="0 101 80 70" font-family="Liberation Sans, sans-serif" font-weight="bold" text-anchor="middle">
<path d="M20.4 117.5 L52.5 114.6 L60.2 140.5 L22.8 144.4 Z" fill="#fdfdfd" stroke="#dcdcdc" stroke-width="0.8" stroke-linejoin="round"/>
<path d="M22.8 144.4 L60.2 140.5 L57.4 156.9 L26.6 160.7 Z" fill="#f1f1f1" stroke="#d6d6d6" stroke-width="0.8" stroke-linejoin="round"/>
<text x="39.1" y="131.2" font-size="6.9" fill="#8f8f8f" transform="rotate(-5 39.1 129)">TOP</text>
<text x="0" y="0" font-size="5.6" fill="#9a9a9a" transform="translate(40.9 153.8) rotate(-6) scale(1.2 0.74)">FRONT</text>
</svg>
<!-- nav buttons -->
<div class="nav" style="left:7.5px;top:171px;width:29px;height:29px;border-radius:15px;"></div>
<div class="nav" style="left:7.5px;top:202px;width:29px;height:29px;border-radius:15px;"></div>
<div class="nav" style="left:7.5px;top:235.5px;width:29px;height:29px;border-radius:15px;"></div>
<div class="nav" style="left:7.5px;top:268px;width:29px;height:29px;border-radius:15px;"></div>
<div class="nav" style="left:7.5px;top:299.5px;width:29px;height:29px;border-radius:15px;"></div>
<!-- home -->
<svg style="left:14px;top:178px" width="16" height="15" viewBox="0 0 16 15"><path d="M1 7.4 L8 1 L15 7.4 H12.8 V13.6 H9.6 V9.2 H6.4 V13.6 H3.2 V7.4 Z" fill="#a9d4f2" stroke="#1d2b3a" stroke-width="1.3" stroke-linejoin="round"/></svg>
<!-- fit view -->
<svg style="left:14.5px;top:209px" width="15" height="15" viewBox="0 0 15 15"><path d="M7.5 3.4 L11.6 7.5 L7.5 11.6 L3.4 7.5 Z" fill="#a9d4f2" stroke="#1d2b3a" stroke-width="1"/><path d="M0.8 3.6 V2 A1.2 1.2 0 0 1 2 0.8 H3.6 M11.4 0.8 H13 A1.2 1.2 0 0 1 14.2 2 V3.6 M14.2 11.4 V13 A1.2 1.2 0 0 1 13 14.2 H11.4 M3.6 14.2 H2 A1.2 1.2 0 0 1 0.8 13 V11.4" fill="none" stroke="#1d2b3a" stroke-width="1.2" stroke-linecap="round"/></svg>
<!-- plus -->
<svg style="left:16px;top:244px" width="12" height="12" viewBox="0 0 12 12"><path d="M6 0.5 V11.5 M0.5 6 H11.5" stroke="#1b1b1b" stroke-width="1.5"/></svg>
<!-- minus -->
<svg style="left:16px;top:281.5px" width="12" height="2" viewBox="0 0 12 2"><path d="M0.5 1 H11.5" stroke="#1b1b1b" stroke-width="1.5"/></svg>
<!-- ortho cube -->
<svg style="left:14.5px;top:306.5px" width="15" height="16" viewBox="0 0 15 16"><path d="M7.5 1.2 L12.4 3.6 V8.6 L7.5 11 L2.6 8.6 V3.6 Z" fill="#fff" stroke="#1d2b3a" stroke-width="1.1" stroke-linejoin="round"/><path d="M2.6 3.6 L7.5 6 L12.4 3.6 M7.5 6 V11" fill="none" stroke="#1d2b3a" stroke-width="1.1"/><path d="M7.5 6 L12.4 3.6 V8.6 L7.5 11 Z" fill="#a9d4f2" stroke="#1d2b3a" stroke-width="1.1" stroke-linejoin="round"/><path d="M0.8 9.4 L7.5 14.8 L14.2 9.4" fill="none" stroke="#1d2b3a" stroke-width="1.2" stroke-linejoin="round"/></svg>

<!-- settings / snap grid -->
<div class="abs" style="left:892px;top:557px;width:50px;height:12.5px;background:#fdfdfd;box-shadow:0 0 0 1px #efefef;"></div>
<div class="t" style="left:904px;top:559.4px;font-size:7.6px;color:#9aa0a8;letter-spacing:-0.05px;">Settings</div>
<div class="t" style="left:863.5px;top:577px;font-size:7.6px;color:#5f6770;letter-spacing:-0.36px;">Snap Grid</div>
<div class="abs" style="left:899px;top:574px;width:42px;height:14px;background:#fdfdfd;box-shadow:0 0 0 1px #efefef;"></div>
<div class="t" style="left:903.5px;top:577px;font-size:7.6px;color:#8a9099;letter-spacing:-0.3px;">1.0 mm</div>
<svg style="left:933px;top:579.5px" width="5" height="4" viewBox="0 0 5 4"><path d="M0 3.4 H5 L2.5 0.2 Z" fill="#333"/></svg>
<!-- panel collapse handle -->
<div class="abs" style="z-index:2;left:943px;top:335.5px;width:10px;height:25.5px;background:#fafafa;border-radius:3px 0 0 3px;box-shadow:0 0 0 1px #ededed;"></div>
<svg style="z-index:3;left:946px;top:342.2px" width="5" height="12" viewBox="0 0 5 12"><path d="M0.8 0.8 L4.2 6 L0.8 11.2" fill="none" stroke="#111" stroke-width="1.5" stroke-linecap="round" stroke-linejoin="round"/></svg>
<!-- ================= RIGHT PANEL ================= -->
<div id="rpanel" class="abs"></div>
<div class="abs" style="left:1108px;top:101px;width:3px;height:496px;background:#f8f8f8;"></div>
<!-- workplane icon -->
<svg style="left:963px;top:110px" width="25" height="25" viewBox="0 0 25 25"><path d="M1 1.6 L23.6 0.8 L24 24.2 L1.6 22.6 Z" fill="#e6f3fb" stroke="#1c8fcf" stroke-width="1.3" stroke-linejoin="round"/><path d="M5.6 1.4 L6 23 M10.2 1.3 L10.5 23.3 M14.8 1.1 L15 23.6 M19.3 1 L19.5 23.9 M1.1 5.9 L23.7 5.5 M1.2 10.2 L23.8 10.2 M1.3 14.4 L23.8 14.9 M1.5 18.6 L23.9 19.6" stroke="#1c8fcf" stroke-width="0.75"/></svg>
<!-- ruler icon -->
<svg style="left:1016.5px;top:111.5px" width="25" height="24" viewBox="0 0 25 24"><path d="M1 1 L5.6 0.6 L6.6 17.2 L24 18.6 L23.8 23.2 L2 21.6 Z" fill="#e6f3fb" stroke="#1c8fcf" stroke-width="1.5" stroke-linejoin="round"/><path d="M3.4 4 H4.6 M3.5 7 H5.2 M3.6 10 H4.8 M3.8 13 H5.4 M3.9 16 H5 M7 19.2 V20.6 M10 19.4 V21.4 M13 19.6 V21 M16 19.9 V21.8 M19 20.1 V21.4 M21.6 20.2 V22" stroke="#1c8fcf" stroke-width="0.8"/></svg>
<!-- notes icon -->
<svg style="left:1071.5px;top:110px" width="20" height="26" viewBox="0 0 20 26"><path d="M3 1 H17 A2 2 0 0 1 19 3 V17 A2 2 0 0 1 17 19 H13.2 L10 24.4 L6.8 19 H3 A2 2 0 0 1 1 17 V3 A2 2 0 0 1 3 1Z" fill="#eaf5fc" stroke="#1c8fcf" stroke-width="1.6" stroke-linejoin="round"/><path d="M5.4 6 H14.6 M5.4 9 H14.6 M5.4 12 H14.6 M5.4 15 H11" stroke="#1c8fcf" stroke-width="1.1"/></svg>
<!-- dropdown + search -->
<div class="abs" style="left:955px;top:147px;width:119px;height:26px;background:#f7f8f9;border-radius:2px;box-shadow:0 1px 1px rgba(0,0,0,0.06);"></div>
<div class="t" id="basic" style="left:961.5px;top:155px;font-size:9.4px;color:#6a6f77;transform:scaleX(0.92);transform-origin:0 0;">Basic Shapes</div>
<svg style="left:1063.5px;top:155px" width="6" height="10" viewBox="0 0 6 10"><path d="M0.4 3.8 L3 0.6 L5.6 3.8 Z M0.4 6.2 L3 9.4 L5.6 6.2 Z" fill="#222"/></svg>
<div class="abs" style="left:1076px;top:147px;width:26px;height:26px;background:#f7f8f9;border-radius:2px;box-shadow:0 1px 1px rgba(0,0,0,0.06);"></div>
<svg style="left:1082px;top:153px" width="15" height="15" viewBox="0 0 15 15"><circle cx="6" cy="6" r="4.6" fill="none" stroke="#111" stroke-width="1.5"/><path d="M9.4 9.4 L13.6 13.6" stroke="#111" stroke-width="1.6" stroke-linecap="round"/></svg>
<!-- cells -->
<div class="cell" style="left:954.5px;top:180px;width:47.5px;height:51px;"></div><div class="cell" style="left:1006px;top:180px;width:46.5px;height:51px;"></div><div class="cell" style="left:1055px;top:180px;width:46px;height:51px;"></div>
<div class="cell" style="left:954.5px;top:235px;width:47.5px;height:54.5px;"></div><div class="cell" style="left:1006px;top:235px;width:46.5px;height:54.5px;"></div><div class="cell" style="left:1055px;top:235px;width:46px;height:54.5px;"></div>
<div class="cell" style="left:954.5px;top:295px;width:47.5px;height:55px;"></div><div class="cell" style="left:1006px;top:295px;width:46.5px;height:55px;"></div><div class="cell" style="left:1055px;top:295px;width:46px;height:55px;"></div>
<div class="cell" style="left:954.5px;top:357px;width:47.5px;height:53px;"></div><div class="cell" style="left:1006px;top:357px;width:46.5px;height:53px;"></div><div class="cell" style="left:1055px;top:357px;width:46px;height:53px;"></div>
<div class="cell" style="left:954.5px;top:417px;width:47.5px;height:53px;"></div><div class="cell" style="left:1006px;top:417px;width:46.5px;height:53px;"></div><div class="cell" style="left:1055px;top:417px;width:46px;height:53px;"></div>
<div class="cell" style="left:954.5px;top:476.5px;width:47.5px;height:54px;"></div><div class="cell" style="left:1006px;top:476.5px;width:46.5px;height:54px;"></div><div class="cell" style="left:1055px;top:476.5px;width:46px;height:54px;"></div>
<div class="cell" style="left:954.5px;top:536px;width:47.5px;height:54px;"></div><div class="cell" style="left:1006px;top:536px;width:46.5px;height:54px;"></div><div class="cell" style="left:1055px;top:536px;width:46px;height:54px;"></div>
<!-- scrollbar -->
<div class="abs" style="left:1101.5px;top:179.5px;width:4px;height:338.5px;background:#bcbcbc;border-radius:0 0 2px 2px;"></div>

<!-- shapes -->
<svg style="left:950px;top:101px" width="158" height="494" viewBox="950 101 158 494">
<defs>
<pattern id="hatch" width="4.2" height="4.2" patternUnits="userSpaceOnUse" patternTransform="rotate(35)"><rect width="4.2" height="4.2" fill="#b7bac0"/><rect width="2.1" height="4.2" fill="#dcdee2"/></pattern>
<radialGradient id="gshade" cx="0.42" cy="0.38" r="0.7"><stop offset="0" stop-color="#fff" stop-opacity="0.25"/><stop offset="0.7" stop-color="#888" stop-opacity="0"/><stop offset="1" stop-color="#555" stop-opacity="0.3"/></radialGradient>
<radialGradient id="gsph" cx="0.4" cy="0.35" r="0.75"><stop offset="0" stop-color="#2aaee2"/><stop offset="1" stop-color="#0f7fb8"/></radialGradient>
<radialGradient id="ghalf" cx="0.4" cy="0.35" r="0.8"><stop offset="0" stop-color="#f028a8"/><stop offset="1" stop-color="#c01080"/></radialGradient>
<linearGradient id="gcyl" x1="0" x2="1"><stop offset="0" stop-color="#f09a38"/><stop offset="0.6" stop-color="#e58420"/><stop offset="1" stop-color="#c96c10"/></linearGradient>
<linearGradient id="gcone" x1="0" x2="1"><stop offset="0" stop-color="#9a48b4"/><stop offset="1" stop-color="#64207c"/></linearGradient>
</defs>
<!-- row 1: hole shapes -->
<path d="M962.6 197.5 L972.4 189.8 L992.7 193.2 L992.7 215 L985.2 223.6 L964.4 219.4 Z" fill="url(#hatch)" stroke="#7d8188" stroke-width="0.7" stroke-linejoin="round"/>
<path d="M962.6 197.5 L985.4 201.6 L992.7 193.2 M985.4 201.6 L985.2 223.6" fill="none" stroke="#8d9198" stroke-width="0.6"/>
<path d="M1016.6 196.4 A12.2 5.4 0 0 1 1041 196.4 V215.4 A12.2 5.6 0 0 1 1016.6 215.4 Z" fill="url(#hatch)" stroke="#7d8188" stroke-width="0.7"/>
<path d="M1016.6 196.4 A12.2 5.4 0 0 0 1041 196.4" fill="none" stroke="#8d9198" stroke-width="0.6"/>
<circle cx="1079" cy="205.3" r="12" fill="url(#hatch)" stroke="#7d8188" stroke-width="0.7"/><circle cx="1079" cy="205.3" r="12" fill="url(#gshade)"/>
<path d="M985.4 201.6 L992.7 193.2 L992.7 215 L985.2 223.6 Z" fill="#555" fill-opacity="0.13"/><path d="M1034 200.6 A12.2 5.4 0 0 0 1041 196.4 V215.4 A12.2 5.6 0 0 1 1034 220.4 Z" fill="#555" fill-opacity="0.13"/>
<!-- row 2 -->
<path d="M962.6 254.8 L972.4 247 L992.7 250.6 L992.7 272.6 L985.2 281.2 L964.4 277 Z" fill="#d0202b"/>
<path d="M962.6 254.8 L972.4 247 L992.7 250.6 L985.4 259 Z" fill="#e02a35"/>
<path d="M985.4 259 L992.7 250.6 L992.7 272.6 L985.2 281.2 Z" fill="#a81520"/>
<path d="M1016.6 253.6 A12.2 5.4 0 0 1 1041 253.6 V272.8 A12.2 5.7 0 0 1 1016.6 272.8 Z" fill="url(#gcyl)" stroke="#9c5a10" stroke-width="0.5"/>
<ellipse cx="1028.8" cy="253.6" rx="12.2" ry="5.4" fill="#f09632" stroke="#b36a14" stroke-width="0.5"/>
<circle cx="1079" cy="263" r="11.5" fill="url(#gsph)"/>
<!-- row 3 -->
<path d="M968 328.6 C967.6 322 971.6 314.4 980.8 311.4 L986.8 311.8 L989.6 316 C989.6 323.6 985.6 329.6 974.6 334.2 L969.6 334.2 Z" fill="#b8c9ef" stroke="#7f95c8" stroke-width="0.6"/>
<path d="M968 328.6 L969.6 334.2 L974.6 334.2 C985.6 329.6 989.6 323.6 989.6 316 L988.4 322 C986 327 980 330.4 973 332.6 Z" fill="#93a8d8"/>
<circle cx="979.4" cy="320.6" r="2.2" fill="#7f95c8"/><path d="M979.4 320.6 L969.4 330.6" stroke="#7f95c8" stroke-width="0.7"/>
<path d="M1028.7 303.5 V343" stroke="#c79be6" stroke-width="0.9" stroke-dasharray="2.4 1.6"/>
<path d="M1028.7 309.6 C1030.4 309.6 1030 318.4 1033 322.6 C1036 326 1043.6 326 1043.6 328.6 C1043.6 331.4 1035 331.8 1032.4 333 C1030.6 334 1030.4 337.8 1028.7 337.8 C1027 337.8 1026.8 334 1025 333 C1022.4 331.8 1014.5 331.4 1014.5 328.6 C1014.5 326 1021.4 326 1024.4 322.6 C1027.4 318.4 1027 309.6 1028.7 309.6Z" fill="#b9dfa9" stroke="#8bbf7c" stroke-width="0.6"/>
<path d="M1016 329.4 C1020 331.6 1037 331.6 1042 329.4" fill="none" stroke="#8bbf7c" stroke-width="0.6"/>
<rect x="1008.7" y="343" width="40.5" height="11.4" rx="5.7" fill="#21a957"/>
<text x="1029" y="351.4" font-family="Liberation Sans, sans-serif" font-weight="bold" font-size="7.4" fill="#fff" text-anchor="middle">New!</text>
<path d="M1068 320 L1071 317.4 L1075.4 326.4 L1079 316.4 L1083 315 L1087.6 324.6 L1087.8 316 L1091.4 315.4 L1091.4 336.8 L1088 338.8 L1082.6 328 L1080 335.6 L1075.4 337 L1071.8 329.8 L1071.4 334.8 L1068.4 334 Z" fill="#a2c7e0" stroke="#7ba6c4" stroke-width="0.6" stroke-linejoin="round"/>
<path d="M1075.4 326.4 L1075.4 337 M1087.6 324.6 L1088 338.8 M1071 317.4 L1071.8 329.8" stroke="#7ba6c4" stroke-width="0.6"/>
<!-- row 4 -->
<path d="M978.4 373.2 L989.6 394 A11 5.2 0 0 1 967.8 394 Z" fill="url(#gcone)"/>
<path d="M1029.4 373.2 L1041.6 392.4 L1033.4 401.2 L1015 396.8 Z" fill="#f2d322" stroke="#9a8410" stroke-width="0.5" stroke-linejoin="round"/>
<path d="M1029.4 373.2 L1041.6 392.4 L1033.4 401.2 Z" fill="#d9b915" stroke="#9a8410" stroke-width="0.5" stroke-linejoin="round"/>
<path d="M1082.3 373.6 L1092.5 384.5 L1091.6 393.6 L1084.6 396.4 L1064.8 391 Z" fill="#2d8f2f" stroke="#1f7420" stroke-width="0.5" stroke-linejoin="round"/>
<path d="M1082.3 373.6 L1084.6 396.4 L1064.8 391 Z" fill="#43b53c"/>
<path d="M1082.3 373.6 L1092.5 384.5 L1091.6 393.6 L1084.6 396.4 Z" fill="#2f9631"/>
<!-- row 5 -->
<g transform="translate(979 443.2) rotate(9) skewX(-14)"><text x="0" y="5" font-family="Liberation Sans, sans-serif" font-weight="bold" font-size="11.6" fill="#8e1018" stroke="#8e1018" stroke-width="1" text-anchor="middle" transform="translate(0.9 1.8)">TEXT</text><text x="0" y="5" font-family="Liberation Sans, sans-serif" font-weight="bold" font-size="11.6" fill="#cd1f2a" text-anchor="middle" stroke="#cd1f2a" stroke-width="1">TEXT</text></g>
<path d="M1014 451.6 L1022.4 438.6 C1026 432.4 1038 432 1042.2 438.4 C1043.6 442 1042 448 1036.6 456.8 Z" fill="#7fc6d4" stroke="#3e8a9a" stroke-width="0.6" stroke-linejoin="round"/>
<path d="M1014 451.6 L1036.6 456.8 C1042 448 1043.6 442 1042.2 438.4 C1038 440 1034 446 1031.6 449.6 Z" fill="#5fb0c0" opacity="0.8"/>
<path d="M1068.2 450.6 C1067.6 443 1072.6 437 1079.6 437 C1086.6 437 1091.4 443 1091 450.6 C1088 455.4 1071.2 455.4 1068.2 450.6Z" fill="url(#ghalf)"/>
<!-- row 6 -->
<ellipse cx="978.8" cy="504.2" rx="11.8" ry="7.8" fill="#1a97cf"/><ellipse cx="978.8" cy="502.4" rx="11" ry="5.6" fill="#25a6de"/><ellipse cx="978.6" cy="503" rx="4.4" ry="1.5" fill="#eaf4fa"/>
<path d="M1017 502 A12 6 0 0 1 1041 502 V506.2 A12 6 0 0 1 1017 506.2 Z" fill="#d97a18" stroke="#a85c0c" stroke-width="0.4"/><ellipse cx="1029" cy="502" rx="12" ry="6" fill="#ee8c26"/><ellipse cx="1029" cy="501.8" rx="5.4" ry="2.6" fill="#b9640e"/>
<path d="M1067.8 502.6 A11.8 5.8 0 0 1 1091.4 502.6 V506.2 A11.8 5.8 0 0 1 1067.8 506.2 Z" fill="#9a6a40" stroke="#6c4624" stroke-width="0.4"/><ellipse cx="1079.6" cy="502.6" rx="11.8" ry="5.8" fill="#a9784c"/><ellipse cx="1079.6" cy="503" rx="9.8" ry="4.3" fill="#e4e2df"/><path d="M1069.8 503.6 A9.8 4.3 0 0 1 1089.4 503.6 A9.8 3 0 0 0 1069.8 503.6Z" fill="#7e5530"/>
<!-- row 7 icosahedron -->
<g transform="translate(1079.5 564) scale(0.84) translate(-1079.5 -563.6)"><path d="M1079 550 L1090.6 556 L1092 569 L1081.6 577 L1069.4 572.6 L1067.4 559 Z" fill="#d3212c"/>
<path d="M1079 550 L1090.6 556 L1081 561.6 Z" fill="#e8343e"/><path d="M1079 550 L1067.4 559 L1081 561.6 Z" fill="#dc2a34"/><path d="M1081 561.6 L1092 569 L1081.6 577 Z" fill="#b81824"/><path d="M1081 561.6 L1067.4 559 L1069.4 572.6 Z" fill="#c41c28"/></g>
</svg>
<!-- ================= WINDOW BOTTOM EDGE + TASKBAR ================= -->
<div class="abs" style="left:0;top:594.5px;width:1111px;height:3.5px;background:#fdfdfd;"></div>
<div id="taskbar" class="abs"></div>
<div class="abs" style="left:0;top:597.7px;width:1111px;height:1px;background:#3f1113;"></div>
<!-- weather -->
<svg style="left:10px;top:600px" width="18" height="20" viewBox="0 0 18 20"><path d="M3.8 17.2 A2.9 2.9 0 0 1 3.6 11.5 A4.4 4.4 0 0 1 11.6 10.4 A3.5 3.5 0 0 1 12 17.2 Z" fill="#c3d4f0"/><path d="M3.8 17.2 A2.9 2.9 0 0 1 1.2 14.6 C5 15.8 11 15.6 15.2 13.8 A3.5 3.5 0 0 1 12 17.2Z" fill="#a3bbe4"/><circle cx="12" cy="5.4" r="4" fill="#dc3a2c"/><text x="12" y="7.6" font-family="Liberation Sans, sans-serif" font-size="6" font-weight="bold" fill="#fff" text-anchor="middle">5</text></svg>
<div class="t" style="left:29px;top:603.6px;font-size:6.8px;font-weight:bold;color:#fff;letter-spacing:-0.2px;">44°F</div>
<div class="t" style="left:29px;top:612.5px;font-size:7.2px;color:#f1e6e6;">Mostly cloudy</div>
<!-- start -->
<svg style="left:395px;top:604.5px" width="14" height="14" viewBox="0 0 14 14"><defs><linearGradient id="wlg" x1="0" y1="0" x2="1" y2="1"><stop offset="0" stop-color="#5fd0fb"/><stop offset="1" stop-color="#1490e0"/></linearGradient></defs><g fill="url(#wlg)"><rect x="0" y="0" width="6.5" height="6.5" rx="0.6"/><rect x="7.3" y="0" width="6.5" height="6.5" rx="0.6"/><rect x="0" y="7.3" width="6.5" height="6.5" rx="0.6"/><rect x="7.3" y="7.3" width="6.5" height="6.5" rx="0.6"/></g></svg>
<!-- search pill -->
<div class="abs" style="left:416.5px;top:602.5px;width:126.5px;height:17.5px;border-radius:9px;background:#f7f0f0;"></div>
<svg style="left:422px;top:606.5px" width="10" height="10" viewBox="0 0 10 10"><circle cx="4.2" cy="4.2" r="3.2" fill="none" stroke="#2a2a2a" stroke-width="1.1"/><path d="M6.6 6.6 L9.2 9.2" stroke="#2a2a2a" stroke-width="1.2" stroke-linecap="round"/></svg>
<div class="t" style="left:437.5px;top:608.2px;font-size:7.5px;color:#5e5e5e;">Search</div>
<!-- pizza -->
<svg style="left:514px;top:603.5px" width="24" height="15" viewBox="0 0 24 15"><path d="M1 9 C3 2.6 9 0.6 14 2 C18 3.4 21 7 23 11 C17 13.6 7 13.4 1 9Z" fill="#f3a52a"/><path d="M3 8.6 C5 4.4 9.4 2.8 13.6 3.8 C16.8 4.8 19.4 7.6 20.8 10.2 C15.6 12 7.8 11.8 3 8.6Z" fill="#f7cf56"/><circle cx="8" cy="7.4" r="1.6" fill="#d8342a"/><circle cx="13" cy="6" r="1.5" fill="#d8342a"/><circle cx="15.6" cy="9.4" r="1.5" fill="#d8342a"/><circle cx="10.8" cy="10" r="1.2" fill="#4c9a3a"/><path d="M3.4 3.4 C4.4 2 6 1.8 6.8 2.6" stroke="#e2532c" stroke-width="1.4" fill="none"/></svg>
<!-- task view -->
<svg style="left:550px;top:604px" width="15" height="14" viewBox="0 0 15 14"><rect x="4.6" y="0.8" width="9.6" height="8.6" rx="1.2" fill="#e9e9e9"/><rect x="0.8" y="4.6" width="9.6" height="8.6" rx="1.2" fill="#8f8f8f" stroke="#4a1517" stroke-width="0.6"/></svg>
<!-- copilot -->
<svg style="left:575px;top:604px" width="15" height="14" viewBox="0 0 14 13"><use href="#copilot" width="14" height="13"/></svg>
<!-- folder -->
<svg style="left:600px;top:604px" width="16" height="14" viewBox="0 0 16 14"><path d="M0.6 2 A1 1 0 0 1 1.6 1 H5.6 L7.2 2.8 H14.4 A1 1 0 0 1 15.4 3.8 V12 A1 1 0 0 1 14.4 13 H1.6 A1 1 0 0 1 0.6 12 Z" fill="#e8a920"/><path d="M0.6 5 H15.4 V12 A1 1 0 0 1 14.4 13 H1.6 A1 1 0 0 1 0.6 12 Z" fill="#fbd04a"/><rect x="5" y="10" width="6" height="3" fill="#2d7dd6"/></svg>
<!-- edge (active) -->
<div class="abs" style="left:622.5px;top:599.5px;width:22.5px;height:23.5px;border-radius:3px;background:#5d2a2c;"></div>
<svg style="left:625.5px;top:602.5px" width="16" height="16" viewBox="0 0 16 16"><defs><linearGradient id="edg" x1="0" y1="0" x2="1" y2="1"><stop offset="0" stop-color="#35c1a0"/><stop offset="0.5" stop-color="#1f9be0"/><stop offset="1" stop-color="#1560c0"/></linearGradient></defs><circle cx="8" cy="8" r="7.4" fill="url(#edg)"/><path d="M3 9.6 C3 5.6 6 4 8.4 4 C11.4 4 13.6 6 13.6 8.2 C13.6 10 12.2 10.8 10.8 10.8 C9.4 10.8 9 10.2 9.4 9.6 C10 8.6 9.2 7.2 7.6 7.2 C5.8 7.2 4.8 8.8 5.2 10.8 C5.6 12.8 7.4 14.2 9.4 14.6 C6 15.4 3 13 3 9.6Z" fill="#0c4a9c" opacity="0.55"/><path d="M1 6.6 C2 3 5 1 8.4 1 C12 1 14.8 3.4 15.2 6.6 C13.8 4.6 11.4 3.6 8.6 3.6 C5.2 3.6 2.4 5 1 6.6Z" fill="#7fe08a" opacity="0.75"/></svg>
<div class="abs" style="left:629.5px;top:621px;width:8px;height:1.6px;border-radius:1px;background:#5aa9ef;"></div>
<!-- store -->
<svg style="left:651px;top:603px" width="16" height="16" viewBox="0 0 16 16"><path d="M5.4 4 V2.8 A1.4 1.4 0 0 1 6.8 1.4 H9.2 A1.4 1.4 0 0 1 10.6 2.8 V4" fill="none" stroke="#e8e8e8" stroke-width="1"/><rect x="1.6" y="4" width="12.8" height="11" rx="1.4" fill="#f1f1f1"/><rect x="4.6" y="6.4" width="3" height="3" fill="#f25022"/><rect x="8.4" y="6.4" width="3" height="3" fill="#7fba00"/><rect x="4.6" y="10.2" width="3" height="3" fill="#00a4ef"/><rect x="8.4" y="10.2" width="3" height="3" fill="#ffb900"/></svg>
<!-- black circle app -->
<svg style="left:676.5px;top:603px" width="15" height="15" viewBox="0 0 15 15"><circle cx="7.5" cy="7.5" r="7.2" fill="#0d0d0d"/><path d="M7.5 3.4 L11.6 7.5 L7.5 11.6 L3.4 7.5 Z" fill="none" stroke="#fff" stroke-width="1.1"/><path d="M7.5 5.4 L9.6 7.5 L7.5 9.6 Z" fill="#fff"/></svg>
<div class="abs" style="left:682.5px;top:621.2px;width:3.4px;height:1.4px;border-radius:1px;background:#a99a9a;"></div>
<!-- phone link / blue app with badge -->
<svg style="left:702px;top:600.5px" width="18" height="18" viewBox="0 0 18 18"><path d="M2 5 L9.4 3.4 V16.6 L2 15 Z" fill="#1e7fd6"/><path d="M9.4 3.4 L15 5.4 V14.6 L9.4 16.6 Z" fill="#4db0f4"/><path d="M2 5 L9.4 3.4 L15 5.4 L8 7 Z" fill="#7fd0fb"/><circle cx="13.4" cy="4.2" r="3.7" fill="#2b8be4" stroke="#4a1517" stroke-width="0.6"/><text x="13.4" y="6.3" font-family="Liberation Sans, sans-serif" font-size="5.6" font-weight="bold" fill="#fff" text-anchor="middle">8</text></svg>
<div class="abs" style="left:708.8px;top:621.2px;width:3.4px;height:1.4px;border-radius:1px;background:#a99a9a;"></div>

<!-- system tray (right) -->
<div class="abs" style="left:998px;top:599px;width:17.5px;height:23.5px;border-radius:3px;background:#5e2a2c;"></div>
<svg style="left:1003px;top:608.5px" width="8" height="5" viewBox="0 0 8 5"><path d="M0.8 0.8 L4 4 L7.2 0.8" fill="none" stroke="#fff" stroke-width="1" stroke-linecap="round" stroke-linejoin="round"/></svg>
<svg style="left:1019.5px;top:605.5px" width="13" height="11" viewBox="0 0 13 11"><path d="M3 8.6 A2.6 2.6 0 0 1 3 3.6 A3.4 3.4 0 0 1 9.4 3 A2.9 2.9 0 0 1 9.6 8.6 Z" fill="#ededed"/><circle cx="9.4" cy="7.6" r="2.9" fill="#2a86e0"/><path d="M9.4 6.2 V6.4 M9.4 7.2 V9.2" stroke="#fff" stroke-width="0.9"/></svg>
<svg style="left:1038.5px;top:605.5px" width="11" height="9" viewBox="0 0 11 9"><path d="M0.6 3 A7 7 0 0 1 10.4 3 M2.2 4.8 A4.7 4.7 0 0 1 8.8 4.8 M3.8 6.5 A2.4 2.4 0 0 1 7.2 6.5" fill="none" stroke="#fff" stroke-width="0.9" stroke-linecap="round"/><circle cx="5.5" cy="8" r="0.8" fill="#fff"/></svg>
<svg style="left:1052.5px;top:606px" width="11" height="10" viewBox="0 0 11 10"><path d="M0.8 3.6 H2.6 L5.2 1.2 V8.8 L2.6 6.4 H0.8 Z" fill="none" stroke="#fff" stroke-width="0.9" stroke-linejoin="round"/><path d="M6.8 3.4 A2.4 2.4 0 0 1 6.8 6.6" fill="none" stroke="#fff" stroke-width="0.9" stroke-linecap="round"/><path d="M8.4 1.8 A4.6 4.6 0 0 1 8.4 8.2" fill="none" stroke="#8a6a6c" stroke-width="0.9" stroke-linecap="round"/></svg>
<div class="t" style="right:11.3px;top:602.8px;font-size:7.2px;color:#fff;text-align:right;letter-spacing:-0.25px;">1:39 PM</div>
<div class="t" style="right:11.3px;top:611.8px;font-size:7.2px;color:#fff;text-align:right;letter-spacing:-0.05px;">2/9/2026</div>

<!-- tray overflow popup -->
<div class="abs" style="left:946.5px;top:538.5px;width:120.5px;height:51px;border-radius:5.5px;background:#2d303a;box-shadow:0 1px 4px rgba(0,0,0,0.25);"></div>
<!-- xbox -->
<svg style="left:955.5px;top:547.5px" width="10.5" height="10.5" viewBox="0 0 10 10"><rect width="10" height="10" rx="0.6" fill="#14922a"/><circle cx="5" cy="5.2" r="3.5" fill="#fff"/><path d="M5 3.4 C4 2.6 3 2.4 2.6 2.8 C3.6 3.6 4.4 4.8 5 5.8 C5.6 4.8 6.4 3.6 7.4 2.8 C7 2.4 6 2.6 5 3.4Z M2.4 7.6 C2.8 6.4 3.8 5.2 5 4.4 C6.2 5.2 7.2 6.4 7.6 7.6 C6.4 8.8 3.6 8.8 2.4 7.6Z" fill="#14922a"/></svg>
<!-- copilot mini -->
<svg style="left:978px;top:547.5px" width="11.5" height="10.5" viewBox="0 0 14 13"><use href="#copilot" width="14" height="13"/></svg>
<!-- blue box -->
<svg style="left:1001.5px;top:547.5px" width="10.5" height="10" viewBox="0 0 10 10"><path d="M0.6 1.6 L5 0.6 L9.4 1.6 V8 L5 9.4 L0.6 8 Z" fill="#1f86de"/><path d="M5 2.6 L9.4 1.6 V8 L5 9.4 Z" fill="#46aef4"/><path d="M0.6 1.6 L5 0.6 L9.4 1.6 L5 2.6 Z" fill="#7ccdfa"/></svg>
<!-- usb -->
<svg style="left:1025.5px;top:546px" width="10" height="13" viewBox="0 0 10 13"><rect x="2" y="0.8" width="4" height="3" fill="none" stroke="#e8e8e8" stroke-width="0.9"/><rect x="1" y="3.8" width="6" height="7.8" rx="1" fill="none" stroke="#e8e8e8" stroke-width="0.9"/><path d="M5.6 9.6 L7 11 L9.6 7.6" fill="none" stroke="#cfcfcf" stroke-width="0.9"/></svg>
<!-- defender shield w/ warning -->
<svg style="left:1048px;top:547px" width="12" height="12" viewBox="0 0 12 12"><path d="M5 0.6 L9.4 2 V5.6 C9.4 8.4 7.4 10 5 10.8 C2.6 10 0.6 8.4 0.6 5.6 V2 Z" fill="#1f86de"/><path d="M5 0.6 L9.4 2 V5.6 H5 Z" fill="#55b8f6"/><path d="M0.6 5.6 H5 V10.8 C2.6 10 0.6 8.4 0.6 5.6Z" fill="#55b8f6"/><path d="M8.4 5.6 L11.6 11.2 H5.2 Z" fill="#f7c21c"/><path d="M8.4 7.6 V9.4 M8.4 10 V10.6" stroke="#222" stroke-width="0.7"/></svg>
<!-- mcafee -->
<svg style="left:955.5px;top:570px" width="11" height="11" viewBox="0 0 11 11"><path d="M1 1.2 L5.2 3.6 L9.4 1.2 V8.8 L5.2 10.4 L1 8.8 Z" fill="none" stroke="#b9bcc4" stroke-width="1.3" stroke-linejoin="round"/><circle cx="8.8" cy="9" r="1.6" fill="#e2432c"/></svg>
<!-- bluetooth -->
<svg style="left:979.5px;top:568.5px" width="9" height="14" viewBox="0 0 9 14"><ellipse cx="4.5" cy="7" rx="4.2" ry="6.6" fill="#1f80e0"/><path d="M2.4 4.6 L6.4 8.8 L4.5 10.8 V3.2 L6.4 5.2 L2.4 9.4" fill="none" stroke="#fff" stroke-width="0.8" stroke-linejoin="round"/></svg>
</body>
</html>
